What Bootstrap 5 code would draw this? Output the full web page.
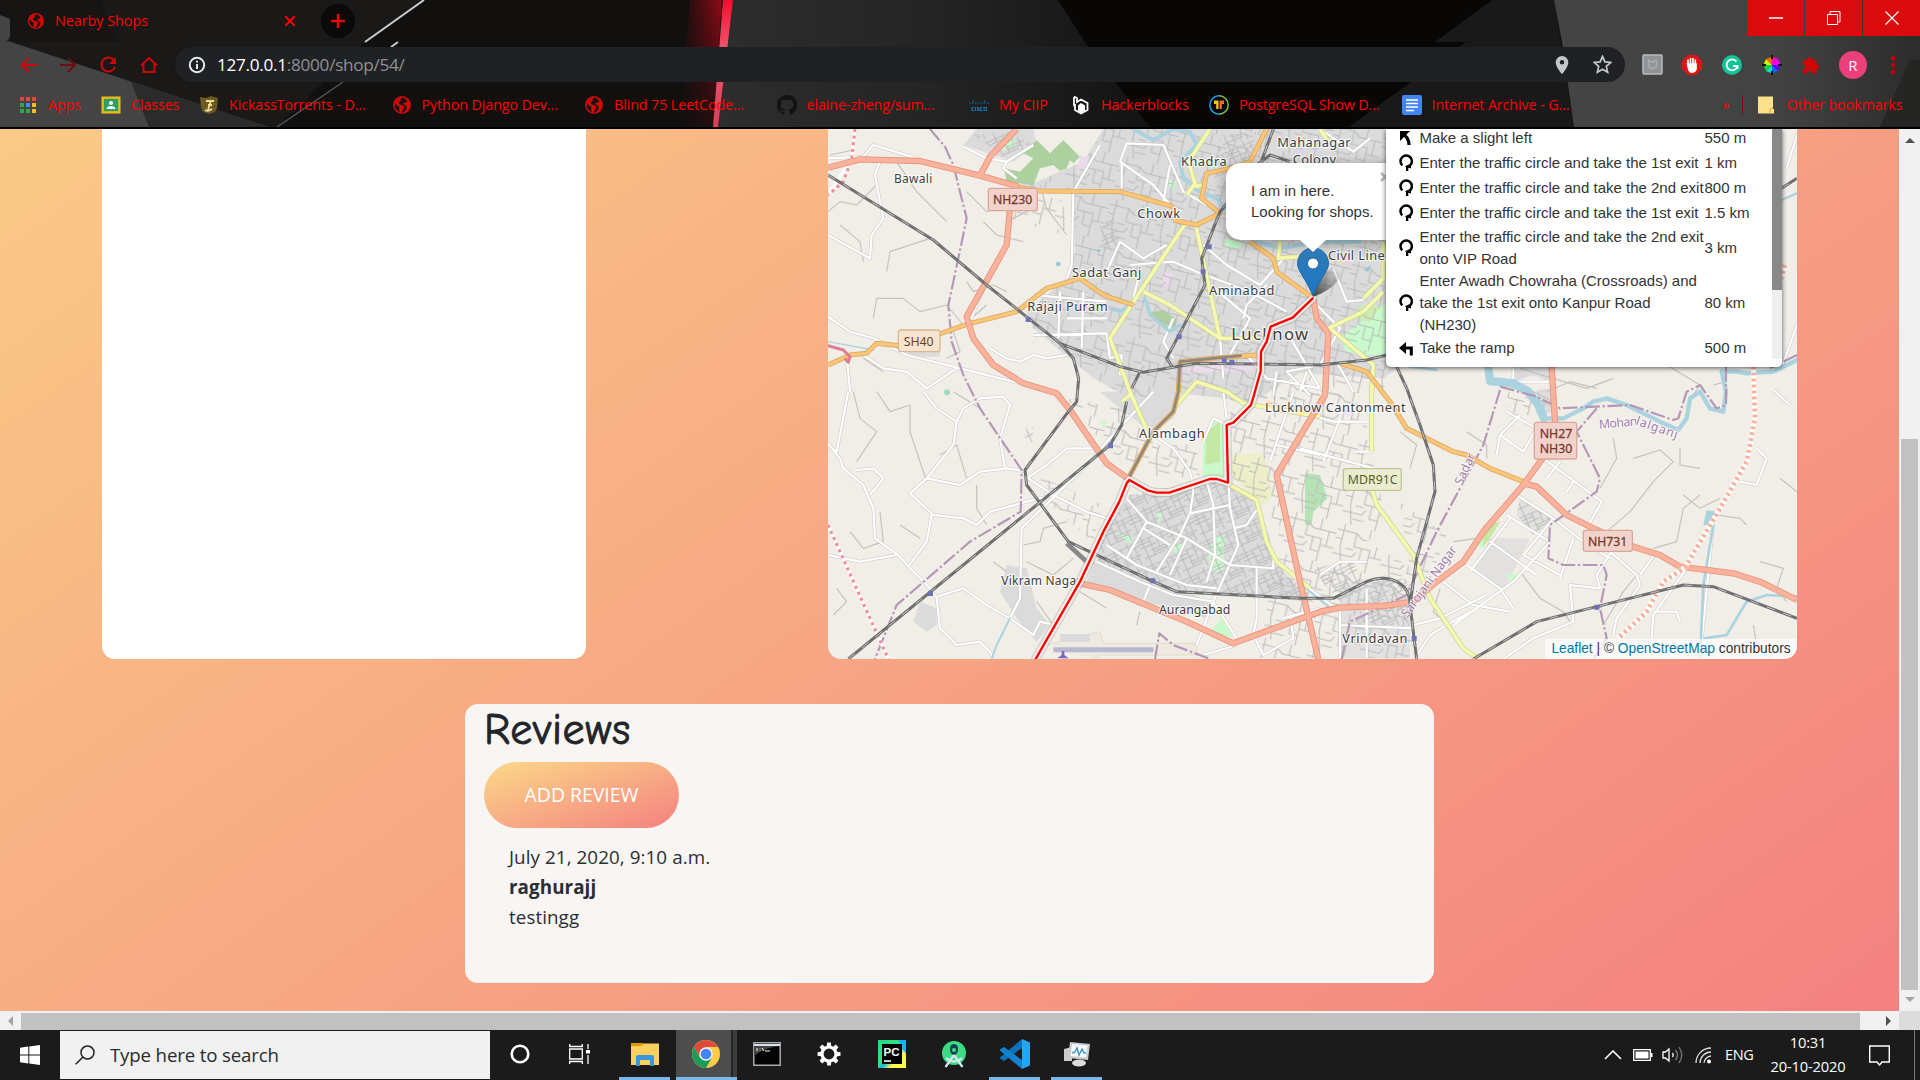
<!DOCTYPE html>
<html lang="en">
<head>
<meta charset="utf-8">
<title>Nearby Shops</title>
<link href="https://cdn.jsdelivr.net/npm/bootstrap@5.3.0/dist/css/bootstrap.min.css" rel="stylesheet">
<style>
body{width:1920px;height:1080px;overflow:hidden;font-family:"Open Sans","Noto Sans",sans-serif;background:#1b1b1b;color:#212529}
svg{display:block;flex:none}
/* browser chrome */
.chrome{height:129px;color:#f00;font-size:14.3px;border-bottom:2px solid #000;line-height:20px;flex:none}
.chrome-art{z-index:0}
.chrome-in{z-index:1}
.tabstrip{height:42px;padding-left:27px}
.tab-title{width:234px;margin-left:10px}
.tab-x{margin-left:-4px}
.newtab{width:34px;height:34px;border-radius:50%;background:#0b0a0a;margin-left:26px}
.winbtns{height:36px;gap:1px}
.winbtns>div{width:57px;background:#db0b0d}
.toolbar{height:45px}
.nav-ic{width:165px;margin-left:20px;gap:21px}
.omni{width:1450px;height:35px;border-radius:18px;background:#202124;margin-left:-10px;font-size:17.2px;letter-spacing:-.3px;color:#8f9296;padding:0 13px}
.omni b{font-weight:400;color:#fff}
.info-ic{margin-right:11px}
.exts{padding-left:17px}
.ext{width:40px;height:34px}
.avatar{width:28px;height:28px;border-radius:50%;background:#ec407a;color:#fff;font-size:15px;margin-left:-3px}
.marks{height:36px;padding-left:18px;letter-spacing:-.1px}
.bm{gap:10px;white-space:nowrap;flex:none}
.bm svg{width:20px;height:20px}
.w83{width:83px}.w98{width:98px}.w192{width:192.5px}.w102{width:102px}.w138{width:138px}.w322{width:321px}
.mark-sep{width:1px;height:20px;background:#801010;margin:0 14px 0 12px}
/* page */
.view{height:882px;flex:none}
.page{width:1899px;background:linear-gradient(to bottom right,#fbd988,#f48180) 0 -465px/1899px 1347px no-repeat}
.top-row{height:530px;padding-left:102px;gap:242px}
.shop-box{width:484px;background:#fff;border-radius:0 0 13px 13px}
.map-box{width:969px;background:#f1eee8;border-radius:0 0 13px 13px;font-family:"Liberation Sans",sans-serif;color:#333}
.route{left:558px;top:0;width:396px;height:238px;background:#fff;border-radius:0 0 5px 5px;box-shadow:0 1px 5px rgba(0,0,0,.65);font-size:15px;line-height:22px;padding:0 0 0 12px}
.route-list{margin-top:-4px;width:374px}
.step{height:25px}
.step>svg{width:17px;height:17px;margin-right:4.5px}
.step>span:nth-child(2){width:285px;white-space:nowrap}
.two{height:45px}.three{height:65.5px}
.mini-track{width:10px;height:230px;background:#efefef}
.mini-thumb{height:161px;background:#888}
.popup{left:398px;top:34px;width:200px;height:77px;background:#fff;border-radius:15px;box-shadow:0 3px 14px rgba(0,0,0,.4);padding:17px 25px;font-size:15px;line-height:21px}
.pin-ic{left:464px;top:110px}
.popup-x{left:552px;top:43px}
.attrib{right:0;bottom:0;height:20px;width:252px;background:rgba(255,255,255,.72);font-size:13.75px;line-height:20px;white-space:nowrap}
.attrib a{color:#0078a8;text-decoration:none}
.reviews{width:969px;height:279px;margin:45px 0 0 465px;border-radius:13px;background:#f9f5f2;padding:0 19px}
.reviews h1{font-family:"Comic Sans MS","Comic Neue","Open Sans",sans-serif;font-size:44px;line-height:48px;margin:2px 0 8px;font-weight:400;letter-spacing:.6px;height:48px;-webkit-text-stroke:.9px #212529}
.btn-add{width:195px;height:66px;border-radius:33px;border:0;background:linear-gradient(to bottom right,#fbd988,#f48180);color:#fff;font-size:19.4px;letter-spacing:0}
.btn-add:hover{color:#fff}
.entry{margin:14px 0 0 25px;font-size:18.8px;line-height:30px;color:#2a2e33;letter-spacing:.08px}
/* scrollbars */
.vbar{width:21px;background:#f1f1f1;padding:9px 0 9px}
.vthumb{width:17px;height:551px;background:#c1c1c1;margin-bottom:7px}
.hbar{height:19px;background:#f1f1f1}
.hthumb{width:1839px;height:17px;background:#c1c1c1}
.corner{background:#dcdcdc}
/* taskbar */
.taskbar{height:50px;background:#1b1b1b;color:#fff;flex:none}
.start{width:60px}
.search{width:430px;height:48px;background:#f1f1f1;color:#2b2b2b;font-size:18.7px;letter-spacing:-.17px;padding-left:15px;gap:15px}
.tb{height:50px;flex:none;border-bottom:3px solid transparent}
.run{border-bottom-color:#76b9ed}
.t60{width:60px}.t64{width:64px}.t62{width:62px}.t51{width:51px}
.t-view{width:69px;padding-right:10px}
.t-active{width:61px;margin-left:6px;padding-right:2px;background:linear-gradient(90deg,#4d4d4d 55px,#252525 55px 57px,#3c3c3c 57px)}
.lang{margin-left:13px;width:29px;font-size:14.5px;letter-spacing:-.4px}
.clock{font-size:14.7px;line-height:24px;letter-spacing:-.15px;width:90px;margin-left:9px;padding-bottom:2px}
.note-ic{margin:0 24px 0 16px}
.desk{width:6px;height:50px;border-left:1px solid #777}
</style>
<script src="https://cdn.jsdelivr.net/npm/bootstrap@5.3.0/dist/js/bootstrap.bundle.min.js"></script>
</head>
<body class="d-flex flex-column m-0">
<svg width="0" height="0" class="position-absolute">
<defs>
<symbol id="globe" viewBox="0 0 20 20"><circle cx="10" cy="10" r="9" fill="#d00808"/><path d="M10.500 2.500 8.300 4.200 9 6 6.600 7.300 7 9.300 10.500 10 12.500 11.800 11 15.500 9 17.500 12 17.200 15 13 14.300 11 12 9.600 10.500 8.500 13 8 15 6.300 13.500 3.800Z" fill="#141312"/><path d="M3 8.200 5 10.500 7.600 12 7 14.500 8 17.300 4.500 15 2.700 11.500Z" fill="#141312"/></symbol>
<symbol id="circ" viewBox="0 0 17 17"><path d="M4.300 11.400A5.700 5.700 0 1 1 11.500 11.900" fill="none" stroke="#000" stroke-width="2.500"/><path d="M7 12.200 13 9.500V14.500L10.300 13.800V17H8V13Z" fill="#000"/></symbol>
</defs>
</svg>

<header class="chrome position-relative">
<svg class="chrome-art position-absolute top-0 start-0" width="1920" height="127" viewBox="0 0 1920 127">
<defs>
<linearGradient id="g1"><stop offset="0" stop-color="#2d2d2d"/><stop offset=".5" stop-color="#242424"/><stop offset="1" stop-color="#131313"/></linearGradient>
<linearGradient id="g2"><stop offset="0" stop-color="#444"/><stop offset=".6" stop-color="#434343"/><stop offset="1" stop-color="#2c2c2b"/></linearGradient>
<linearGradient id="g3"><stop offset="0" stop-color="#a00612" stop-opacity="0"/><stop offset="1" stop-color="#b00818" stop-opacity=".8"/></linearGradient>
<linearGradient id="g5" x1="0" y1="0" x2="0" y2="1"><stop offset="0" stop-color="#11100f" stop-opacity="0"/><stop offset="1" stop-color="#11100f" stop-opacity=".85"/></linearGradient>
<linearGradient id="g4" x1="0" y1="0" x2="0" y2="1"><stop offset="0" stop-color="#ff0a30"/><stop offset=".4" stop-color="#ea5a70"/><stop offset="1" stop-color="#d84055"/></linearGradient>
</defs>
<rect width="1920" height="127" fill="#11100f"/>
<path d="M0 0H424L365 42 277 127H0Z" fill="#1a1918"/>
<path d="M0 0H100L120 42 H0Z" fill="#161514"/>
<path d="M0 15 10 19V36Q9 41 4 42L8 41 269 127H0Z" fill="#444"/>
<path d="M113 75 269 127H149L131 82Z" fill="#2b2b2b"/>
<path d="M424 0 365 42M398 42 391 47" stroke="#ccc" stroke-width="2"/><path d="M343 82 277 127" stroke="#555" stroke-width="1.500"/>
<path d="M733 0H1058L1085 42 1150 127H718Z" fill="url(#g1)"/>
<path d="M690 0H722L713 127H680Z" fill="url(#g3)"/><path d="M680 0H722L713 127H680Z" fill="url(#g5)"/>
<path d="M723 0H733L718 127H713Z" fill="url(#g4)"/>
<path d="M1058 0 1085 42 1150 127H1349L1466 42H1435L1492 0Z" fill="#080706"/>
<path d="M1492 0 1435 42H1466L1349 127H1574L1554 0Z" fill="#191919"/>
<path d="M1554 0 1562 42 1574 127H1920V0Z" fill="url(#g2)"/><path d="M1910 60 1880 127H1920V60Z" fill="#252524"/>
</svg>
<div class="chrome-in position-relative d-flex flex-column">
<div class="tabstrip d-flex align-items-center">
<svg width="18" height="18"><use href="#globe"/></svg>
<div class="tab-title">Nearby Shops</div>
<svg class="tab-x" width="10" height="10" viewBox="0 0 10 10"><path d="M0 0 10 10M10 0 0 10" stroke="#f00" stroke-width="2"/></svg>
<div class="newtab d-flex align-items-center justify-content-center"><svg width="16" height="16"><path d="M8 1V15M1 8H15" stroke="#f00" stroke-width="2.400"/></svg></div>
<div class="winbtns d-flex ms-auto align-self-start">
<div class="d-flex align-items-center justify-content-center"><svg width="14" height="2"><path d="M0 1H14" stroke="#fff" stroke-width="1.500"/></svg></div>
<div class="d-flex align-items-center justify-content-center"><svg width="14" height="14"><path d="M.5 3.500H10.500V13.500H.5ZM3 3V.6H13V11H11" fill="none" stroke="#fff"/></svg></div>
<div class="d-flex align-items-center justify-content-center"><svg width="14" height="14"><path d="M.5.5 13.500 13.500M13.500.5.5 13.500" stroke="#fff" stroke-width="1.200"/></svg></div>
</div>
</div>
<div class="toolbar d-flex align-items-center">
<div class="nav-ic d-flex">
<svg width="18" height="18"><path d="M17 9H2M9 2 2 9 9 16" fill="none" stroke="#d00505" stroke-width="2"/></svg>
<svg width="19" height="18"><path d="M1 9H16M9 2 16 9 9 16" fill="none" stroke="#6e0f0f" stroke-width="2"/></svg>
<svg width="20" height="18"><path d="M15.500 5A7 7 0 1 0 16 11" fill="none" stroke="#d00505" stroke-width="2"/><path d="M17 1V8H10Z" fill="#d00505"/></svg>
<svg width="18" height="18"><path d="M3.500 8V16H14.500V8M1 9.500 9 2 17 9.500" fill="none" stroke="#d00505" stroke-width="2"/></svg>
</div>
<div class="omni d-flex align-items-center">
<svg width="18" height="18" class="info-ic"><circle cx="9" cy="9" r="7.200" fill="none" stroke="#e8eaed" stroke-width="2"/><path d="M9 8V13M9 4.700V6.600" stroke="#e8eaed" stroke-width="2"/></svg>
<div><b>127.0.0.1</b>:8000/shop/54/</div>
<div class="d-flex align-items-center gap-4 ms-auto">
<svg width="14" height="18" viewBox="0 0 14 18"><path fill-rule="evenodd" d="M7 0A6.300 6.300 0 0 0 .7 6.400C.7 11 7 18 7 18S13.300 11 13.300 6.400A6.300 6.300 0 0 0 7 0ZM7 4A2.300 2.300 0 1 1 7 8.600 2.300 2.300 0 0 1 7 4Z" fill="#c4c7c9"/></svg>
<svg width="19" height="19" viewBox="0 0 20 20"><path d="M10 1.500 12.500 7.300 18.700 7.900 14 12 15.400 18.100 10 14.900 4.600 18.100 6 12 1.300 7.900 7.500 7.300Z" fill="none" stroke="#c4c7c9" stroke-width="1.800"/></svg>
</div>
</div>
<div class="exts d-flex align-items-center">
<div class="ext d-flex align-items-center"><svg width="21" height="21"><rect x="1" y="1" width="19" height="19" rx="1" fill="#8f9296" stroke="#b9bcbf" stroke-width="1.500"/><path d="M6.500 6 10.500 8.500 14.500 6V12.500L10.500 15 6.500 12.500Z" fill="none" stroke="#abaeb1" stroke-width="1.500"/></svg></div>
<div class="ext d-flex align-items-center"><svg width="20" height="20" viewBox="0 0 20 20"><path d="M6 0H14L20 6V14L14 20H6L0 14V6Z" fill="#e60f12"/><path d="M6 9V5M8.500 9V3.500M11 9V3.500M13.300 10V5M5.500 9H14V13C14 18 8 18 7 15Z" stroke="#fff" stroke-width="1.700" stroke-linecap="round" fill="#fff"/></svg></div>
<div class="ext d-flex align-items-center"><svg width="20" height="20"><circle cx="10" cy="10" r="10" fill="#15c39a"/><path d="M14.500 6.500A5.500 5.500 0 1 0 15.500 11H11M15.500 11V14" fill="none" stroke="#fff" stroke-width="1.800"/></svg></div>
<div class="ext d-flex align-items-center"><svg width="20" height="20" viewBox="-10 -10 20 20"><path d="M0 0V-8.500L6-6Z" fill="#f0c"/><path d="M0 0 6-6 8.500 0Z" fill="#f0f"/><path d="M0 0H8.500L6 6Z" fill="#60f"/><path d="M0 0 6 6 0 8.500Z" fill="#06f"/><path d="M0 0V8.500L-6 6Z" fill="#0de0d0"/><path d="M0 0-6 6-8.500 0Z" fill="#0d3"/><path d="M0 0H-8.500L-6-6Z" fill="#cf0"/><path d="M0 0-6-6 0-8.500Z" fill="#f60"/><path d="M0-10V-6M0 10V6M-10 0H-6M10 0H6" stroke="#111" stroke-width="2"/></svg></div>
<div class="ext d-flex align-items-center"><svg width="19" height="19" viewBox="0 0 19 19"><path d="M1 5H5.500A2.300 2.300 0 1 1 10 5H14.500V9.500A2.300 2.300 0 1 1 14.500 14V18.500H10A2.300 2.300 0 1 0 5.500 18.500H1V14A2.300 2.300 0 1 0 1 9.500Z" fill="#d00505"/></svg></div>
<div class="avatar d-flex align-items-center justify-content-center">R</div>
<svg width="28" height="18"><path d="M24 0H28V4H24ZM24 7H28V11H24ZM24 14H28V18H24Z" fill="#b50505"/></svg>
</div>
</div>
<div class="marks d-flex align-items-center">
<div class="bm d-flex w83"><svg viewBox="0 0 20 20"><path d="M2 2H6V6H2ZM8 2H12V6H8ZM14 2H18V6H14Z" fill="#e8453c"/><path d="M2 8H6V12H2ZM2 14H6V18H2Z" fill="#2da94f"/><path d="M8 8H12V12H8Z" fill="#4688f1"/><path d="M14 8H18V12H14ZM14 14H18V18H14Z" fill="#f9bb2d"/><path d="M8 14H12V18H8Z" fill="#2da94f"/></svg>Apps</div>
<div class="bm d-flex w98"><svg viewBox="0 0 20 20"><rect x=".5" y="1.500" width="19" height="17" fill="#f4b912"/><rect x="2.800" y="3.800" width="14.400" height="12.400" fill="#2f9e62"/><circle cx="10" cy="8" r="2" fill="#fff"/><path d="M5.500 14Q6 11 10 11T14.500 14Z" fill="#fff"/></svg>Classes</div>
<div class="bm d-flex w192"><svg viewBox="0 0 20 20"><path d="M1 2 7 3 12 1 19 3 18 13 16 17 10 19 4 17 2 12Z" fill="#6b5a24"/><path d="M7 6H15M12 5 9 15M6 15Q9 17 13 14M9 10H13" stroke="#efdf94" stroke-width="1.800" fill="none"/></svg>KickassTorrents - D...</div>
<div class="bm d-flex w192"><svg viewBox="0 0 20 20"><use href="#globe"/></svg>Python Django Dev...</div>
<div class="bm d-flex w192"><svg viewBox="0 0 20 20"><use href="#globe"/></svg>Blind 75 LeetCode...</div>
<div class="bm d-flex w192"><svg viewBox="0 0 16 16"><path fill="#131211" d="M8 0C3.580 0 0 3.580 0 8c0 3.540 2.290 6.530 5.470 7.590.4.070.55-.17.55-.38v-1.340c-2.230.48-2.700-1.070-2.700-1.070-.36-.92-.89-1.170-.89-1.170-.73-.5.05-.49.05-.49.81.06 1.230.83 1.230.83.72 1.230 1.880.87 2.340.67.070-.52.28-.88.51-1.080-1.780-.2-3.640-.89-3.640-3.950 0-.87.31-1.590.82-2.150-.08-.2-.36-1.020.08-2.120 0 0 .67-.21 2.200.82a7.500 7.500 0 0 1 4 0c1.530-1.040 2.200-.82 2.200-.82.44 1.100.16 1.920.08 2.120.51.56.82 1.270.82 2.150 0 3.070-1.870 3.750-3.650 3.950.29.25.54.73.54 1.480v2.190c0 .21.15.46.55.38A8 8 0 0 0 8 0"/></svg>elaine-zheng/sum...</div>
<div class="bm d-flex w102"><svg viewBox="0 0 20 20"><path d="M1 7V9M4 5V9M7 7V9M10 7V9M13 7V9M16 5V9M19 7V9" stroke="#0a5a78" stroke-width="1.200"/><path d="M5 12.500H3V15.500H5M6.500 12V16M10 12.500H8.500V14H10V15.500H8M13.500 12.500H11.500V15.500H13.500M15 12.500H17.500V15.500H15Z" fill="none" stroke="#0a7aa6" stroke-width="1.100"/></svg>My CIIP</div>
<div class="bm d-flex w138"><svg viewBox="0 0 20 20"><path d="M3 1.500 6 3V7L10 4.500 16.500 8V15L10 18.500 4 15V9M3 2V10L4 12" fill="none" stroke="#fff" stroke-width="1.800"/><path d="M10 8 14 10.500V15.500L10 18 7 15.500V10.500Z" fill="#fff"/></svg>Hackerblocks</div>
<div class="bm d-flex w192"><svg viewBox="0 0 20 20"><path d="M10 .8A9.200 9.200 0 0 0 10 19.200" fill="none" stroke="#13a7e8" stroke-width="1.500"/><path d="M10 .8A9.200 9.200 0 0 1 10 19.200" fill="none" stroke="#84c341" stroke-width="1.500"/><path d="M5 5.500H9.500V14H7.200V9H5Z" fill="#fcc419"/><path d="M10.500 5.500H15V9H12.800V14H10.500Z" fill="#f26a2e"/></svg>PostgreSQL Show D...</div>
<div class="bm d-flex w322"><svg viewBox="0 0 20 20"><rect width="20" height="20" rx="2" fill="#4285f4"/><path d="M4 5H16M4 8.500H16M4 12H16M4 15.500H12" stroke="#fff" stroke-width="1.700"/></svg>Internet Archive - G...</div>
<div>»</div><div class="mark-sep"></div>
<div class="bm d-flex"><svg viewBox="0 0 20 20"><path d="M1 1.500H16V14H17V18.500H1Z" fill="#fde08a"/><path d="M13 18.500V15Q13 13 16 13" stroke="#dba520" fill="none"/></svg>Other bookmarks</div>
</div>
</div>
</header>

<main class="view d-flex">
<div class="page">
<div class="top-row d-flex">
<div class="shop-box"></div>
<div class="map-box position-relative overflow-hidden">
<svg width="969" height="530" viewBox="24 12 2907 1590" fill="none" stroke-linejoin="round">
<defs>
<pattern id="st" width="150" height="130" patternUnits="userSpaceOnUse" patternTransform="rotate(14)"><path d="M0 20H60L80 34H150M20 0V70L36 130M60 20V60H110V130M0 92H60L70 76M100 34V0M110 80H150M36 70H60M128 34V80M0 46H20M84 60V100H110M70 110H36" stroke="#bababa" stroke-width="3" fill="none"/></pattern>
<pattern id="st2" width="90" height="80" patternUnits="userSpaceOnUse" patternTransform="rotate(-24)"><path d="M0 12H90M0 34H52M30 50H90M0 66H66M14 0V80M36 12V66M58 0V50M76 12V80M0 22H36M58 24H90M36 58H76" stroke="#b8b8b8" stroke-width="2.800" fill="none"/></pattern>
<linearGradient id="pin" x1="0" y1="0" x2="0" y2="1"><stop offset="0" stop-color="#2e7cb8"/><stop offset="1" stop-color="#1d75c4"/></linearGradient>
</defs>
<!-- built-up land -->
<g fill="#dbdbdb">
<path d="M560 180 650 170 790 110 850 12H1740V725H1740L1690 760 1440 745 1300 830 1040 800 950 830 820 760 640 610 620 560 740 460 765 380 755 200Z"/>
<path d="M470 12 640 12 650 60 580 110 430 60Z"/>
<path d="M930 1110 1060 1105 1200 1060 1300 1110 1350 1240 1360 1310 1480 1430 1060 1400 830 1310 850 1230Z"/><path d="M820 1310 1180 1430 1160 1480 980 1430 800 1370Z"/>
<path d="M840 800H1080L1060 880 990 920 900 850Z"/>
<path d="M560 1320 620 1330 650 1450 690 1500 650 1550 590 1480 540 1400Z"/><path d="M300 1430 350 1450 350 1500 320 1520 280 1490Z"/>
<path d="M1560 1380 1700 1350 1770 1450V1600H1560Z" opacity=".7"/><path d="M2080 720H2190V770L2140 750 2080 770ZM2150 795 2200 790 2200 860 2150 870Z"/>
<path d="M2100 1120 2200 1180 2140 1230 2090 1170ZM2010 1240 2130 1240 2050 1400 1960 1340Z" opacity=".7"/>
<path d="M260 680H360V695H270Z"/>
</g>
<!-- green, water, leisure -->
<g fill="#c8facc">
<path d="M1660 560 1700 535V690H1640L1580 680 1560 640Z"/><path d="M1190 880 1210 890V1055H1148L1150 940Z"/><path d="M1190 1235 1215 1230 1210 1340 1170 1340 1165 1270ZM1060 1255 1090 1255 1080 1280 1060 1280ZM1010 1165 1028 1165 1015 1200ZM885 1220 940 1240 930 1255ZM1205 1480 1240 1540 1170 1520ZM840 880 860 890 850 910Z"/>
<path d="M2060 1350 2095 1345 2085 1375 2070 1380ZM1970 1260 2000 1240 1990 1270ZM580 40 590 60 540 80ZM1040 165 1070 170 1060 200ZM1210 340 1270 350 1260 370H1220Z"/></g>
<path d="M1620 540 1680 545 1650 590 1600 580Z" fill="#cdebb0"/>
<path d="M552 130 600 140 640 100 610 85 650 45 690 85 730 45 780 95 760 115 750 105 740 130 720 138 700 120 660 130 640 180 560 170Z" fill="#add19e"/>
<path d="M985 565 1030 555 1072 585 1065 610 1030 600Z" fill="#add19e"/><path d="M1455 1045 1500 1050 1522 1120 1480 1160 1475 1200H1455Z" fill="#b5e3b5"/>
<path d="M1160 920 1200 890V1010L1155 1020Z" fill="#c5e8a5"/><path d="M1225 990 1330 985 1362 1110 1330 1140 1240 1060Z" fill="#eeeec8"/>
<path d="M1990 1200 2040 1190 2010 1240 1990 1265Z" fill="#c5e8a5"/>
<path d="M770 150 780 90 815 100 790 130ZM1030 440 1060 445 1050 490 1025 480ZM1100 730 1300 705V735L1110 745Z" fill="#eadcea"/>
<path d="M680 1560 840 1520 850 1555H1130V1590H840L820 1600" stroke="#e5dcc8" stroke-width="3" fill="#eeeae0"/><path d="M700 1567H1000V1582H700Z" fill="#b8b8d0"/><path d="M720 1527H810V1550H720Z" fill="#d9d9de"/>
<path d="M2660 1155 2690 1160 2675 1205 2650 1200Z" fill="#aad3df"/>
<g fill="#8fc9d8"><circle cx="715" cy="417" r="7"/><circle cx="836" cy="377" r="5"/><path d="M1630 435 1655 420 1645 440Z"/></g><circle cx="381" cy="802" r="9" fill="#9fdcc3"/>
<!-- dense local streets -->
<g fill="url(#st)">
<path d="M560 180 650 170 790 110 850 12H1700V725L1690 800 1300 830 1040 800 950 830 820 760 640 610 620 560 740 460 765 380 755 200Z"/>
<path d="M640 200 730 230 740 330 580 290 590 210ZM740 820 900 850 1010 960 1130 960 1140 1060 940 1050 820 920ZM650 1050 850 1140 820 1250 680 1130Z"/>
<path d="M1230 820 1620 800 1700 1200 1640 1250 1780 1330V1600H1320L1340 1450 1380 1200 1240 1060 1230 900Z"/>
<path d="M2060 800H2180V870H2070ZM1740 1130 1880 1230 1830 1370 1760 1300Z"/>
</g>
<g fill="url(#st2)"><path d="M930 1110 1200 1060 1300 1110 1360 1310 1480 1430 1060 1400 830 1310 850 1230ZM1200 30 1310 20 1290 120 1180 160ZM840 300 880 280 910 370 850 380ZM460 30 560 20 640 60 560 100ZM620 900 640 910V950H610ZM1470 1330 1600 1310 1640 1390 1560 1430Z"/><path d="M2100 1120 2200 1180 2140 1230 2090 1170ZM1660 1370 1760 1360 1770 1500 1600 1500Z"/></g>
<!-- country lanes -->
<g stroke="#c4c2be" stroke-width="3.500">
<path d="M24 260 60 230 110 240 170 180M230 110 290 200 380 290M440 200 500 260 560 240M490 290 530 330 610 350M130 410 120 350 60 300M200 440 210 380 330 340M30 90 100 75M160 580 170 520 250 520 300 560 380 540 430 600 500 540M190 740 130 700M400 620 420 680 380 700M560 500 520 480 460 500 440 470M660 180 680 250 740 330M640 250 560 290"/>
<path d="M100 800 120 880 170 920 110 1010M170 800 210 860 270 840 270 920 320 1070M400 800 480 850M360 990 410 960 440 1060M470 1080 470 1150 500 1200M90 1220 130 1270 190 1250 180 1160M240 1200 300 1240M40 1470 80 1430 50 1390M520 1310 560 1340M610 1260 660 1250 670 1210 740 1190M620 1310 700 1350 760 1300M700 1500 650 1430M780 1400 860 1450M950 1500 960 1460"/>
<path d="M2380 940 2390 1000 2340 1090M2440 1000 2520 975 2560 1010 2500 1070 2430 1160 2360 1220M2580 970 2580 1020 2640 1030M2690 1170 2760 1180 2780 1200M2880 1060 2931 1100M2640 1110 2590 1150 2570 1250 2500 1270M2590 1110 2640 1150 2700 1120M2350 1500 2410 1400 2450 1350M2100 1340 2160 1420 2230 1460 2250 1490M1860 1390 1840 1460 1900 1520M1900 1250 1970 1240 2000 1200M1940 920 2000 960 2000 1000M2120 790 2200 830M2100 730 2300 790 2380 760M2820 1310 2890 1330 2870 1390 2900 1430M2800 1500 2810 1560 2850 1600M2540 720 2640 780 2600 840M1740 920 1790 960 1770 1030M2680 780 2720 770M2180 800 2250 770 2330 790"/>
</g>
<!-- white minor roads: casing then fill -->
<g stroke="#cdcbc7" stroke-width="10">
<path id="mr" d="M180 110 165 150 190 280 155 330 150 400 24 330M24 100 130 95 160 60 290 100M24 575 90 620 160 640 260 690 400 725 600 775M80 690 90 800M130 690 190 730 260 740 320 790 410 730M430 65 500 100 560 110 550 130 590 160M490 490 470 540 450 590M510 670 560 700 600 710 640 690 680 700 740 690M640 60 560 110M760 200 755 420 740 460M760 200 840 60M900 110 920 55 1030 60 1060 130 1090 200 1160 240M905 190 905 110M1030 230 1050 120M1050 240 1000 180 900 110M860 440 900 350 970 400 1040 360M930 420 1060 410 1130 440 1290 500 1400 560M960 440 940 520M1060 580 1030 650 1060 700M640 510 860 530M720 500 715 640M790 500 785 670M640 630 860 625M740 580 860 580M860 625 870 700 905 690 900 750M1150 360 1220 420 1320 480 1400 390M1160 470 1290 580 1230 690M1200 640 1210 760M1270 580 1280 540 1340 480M1500 12 1600 80 1650 40M1280 690 1340 760 1500 790M1480 530 1560 610 1500 720 1400 740 1470 810M1400 620 1500 790M1360 810 1370 740M1550 710 1600 800M1460 740 1440 800M1540 430 1580 530 1630 525M24 955 60 1000 70 1030 130 1080 160 1150 165 1240 235 1290 270 1330 330 1390 350 1420 360 1510 410 1560 480 1550 510 1580 520 1602M24 960 50 980 85 800M110 1035 160 1030 190 1060 150 1110M310 800 350 850 410 890 400 960 320 1060 420 1080 480 1040 560 1030 620 1040M320 1060 270 1105 340 1170 430 1180 470 1200 510 1160 620 1130 700 1110M335 1170 320 1250 265 1325M24 1290 120 1310 230 1290M410 890 430 850 480 820 550 815 570 840 540 940 555 1030M350 1415 430 1390 500 1440 570 1480 640 1530 660 1490 700 1500M570 1480 600 1420 605 1210 820 1000 860 950 1000 800M620 1060 680 1020 740 970 820 970M625 1060 700 1110 800 1160 860 1180M1000 930 1060 970 1110 1040 1115 1060 1120 1100 1110 1165 1080 1230 1010 1340M1110 1165 1230 1140M1160 1070 1180 1140 1185 1290 1160 1370M920 1120 980 1190 1100 1240 1230 1320 1360 1330 1360 1300M980 1190 920 1300M860 1260 950 1320 1100 1380 1190 1390M830 1310 960 1370 1060 1410 1180 1430 1250 1540M1225 1060 1230 1150 1255 1260 1180 1430 1130 1560M1320 1140 1280 1200 1240 1210M1310 1330 1310 1480 1300 1530 1330 1590 1420 1540 1410 1470M970 1210 1050 1260M1100 1240 1050 1350M990 1380 970 1430M1150 1590 1250 1560M1210 800 1220 880M1150 950 1180 880 1220 900M1420 800 1350 1010M1370 960 1500 990"/>
<path id="me" d="M1440 860 1540 890 1660 890M1560 880 1510 1010M1440 970 1660 1030M1600 980 1660 980M2060 860 2150 910 2110 980 2040 930 2100 870M2040 930 2030 990M2170 1000 2345 1130 2300 1210M2260 1070 2240 1100M2090 1110 2200 1180 2290 1250M2200 1180 2110 1290 2220 1350M2060 1170 2190 1250M2070 1180 1950 1340M2190 1250 2080 1370 1900 1500M2150 1350 2010 1250M1940 1320 2040 1390 2080 1450M1870 1370 1960 1440 2070 1460M2290 1250 2370 1300M2370 1280 2450 1350 2460 1380 2390 1480 2380 1530M2510 1280 2460 1350M2380 1270 2330 1350 2340 1390 2250 1380 2260 1490 2140 1540 2050 1602M2220 1360 2260 1240M1780 1500 1860 1480 2000 1410M1785 1600 1830 1530 1950 1460M1560 1500 1780 1510M1640 1390V1600M1440 1370 1560 1460 1560 1600M1500 1350 1560 1310 1640 1310M2810 970 2840 1000 2810 1080 2760 1070M2600 1330 2550 1400 2500 1470 2490 1602M2510 1460 2570 1460 2580 1490M2931 600 2880 740M2931 30 2900 130M2680 1190 2640 1602M2080 730 2080 770 2190 770M2910 840 2860 795M2220 1010 2180 1060M1390 1480 1500 1450"/>
</g>
<g stroke="#fff" stroke-width="6.500"><use href="#mr"/><use href="#me"/></g>
<!-- rivers -->
<g stroke="#aad3df" stroke-linecap="round">
<path d="M940 12 1000 45 1060 12 1110 20 1130 60 1080 110 1090 160 1130 195 1190 220 1240 280 1310 350 1380 370 1500 350 1620 350" stroke-width="12"/>
<path d="M870 550 900 560 930 540M975 520 990 570 1050 620 1080 600" stroke-width="10"/>
<path d="M2005 725 2010 765 2070 780 2120 800 2150 830 2170 880 2230 880 2290 850 2320 830 2360 820 2420 840 2520 890 2575 915 2600 880 2610 820 2640 800 2670 850 2710 860 2718 800 2705 740 2750 740 2780 745 2860 740 2931 705" stroke-width="13"/>
<path d="M2005 725 2010 768 2080 775 2125 800 2155 840 2172 880" stroke-width="25"/><path d="M1770 725 1850 735" stroke-width="8"/>
<path d="M2885 225 2931 205" stroke-width="7"/><path d="M2680 1200 2650 1380 2640 1602M2655 1540 2720 1530 2780 1430 2840 1410 2931 1415" stroke-width="8"/>
<path d="M570 1480 530 1560 515 1602M1440 1375 1530 1450" stroke-width="6"/><path d="M24 650 160 675" stroke-width="4"/>
</g>
<!-- boundaries -->
<g stroke="#b596b6" stroke-width="6.500" stroke-dasharray="44 8 7 8">
<path d="M330 12 375 65 400 120 440 280 415 400 385 540 395 650 430 750 480 850 605 1035 602 1160 450 1250 230 1440 165 1602"/>
<path d="M1005 1602 1018 1525 1060 1560 1170 1602M2040 795 1990 960 1850 1220 1760 1410 1590 1490 1565 1602M2040 785 2150 815 2220 850 2430 840 2560 885 2575 880 2600 800 2640 780 2690 850 2718 840V725M2330 850 2270 920 2340 1060 2330 1100 2190 1200 2185 1300 2230 1320 2350 1320 2360 1350 2340 1450 2360 1540 2320 1602M2931 690 2850 730"/>
</g>
<g stroke="#fff" stroke-width="10"><path d="M105 12 95 100 24 210M24 1200 205 1602"/></g>
<g stroke="#f08a9c" stroke-width="9" stroke-dasharray="9 11"><path d="M105 12 95 100 70 170 24 210M24 1200 205 1602"/></g>
<!-- secondary roads -->
<g stroke="#c9cf9a" stroke-width="15"><path id="yl" d="M1170 12 1105 110 1125 175 1100 210M1125 185 1150 180M1100 290 960 500 870 640 930 800 980 915M1125 290 1200 640 1320 640M970 500 1050 540 1200 640M1370 400 1500 390M1630 520 1690 460 1690 350M1525 610 1630 560 1690 500M1530 610 1660 720 1655 800V980M1655 1090 1670 1140 1700 1180 1780 1290 1830 1420 1930 1570 1975 1602M1230 1080 1310 1125 1340 1250 1370 1310 1470 1390M905 830 930 810M1060 850 1130 770 1220 800 1270 835 1500 875M1380 350 1375 400M1500 12 1525 50"/></g>
<use href="#yl" stroke="#f4f9ae" stroke-width="11"/>
<!-- orange roads -->
<g stroke="#d9a860" stroke-width="15"><path id="or" d="M580 185 660 198 900 200 1060 245M1060 285 1130 300 1200 265 1145 220 1160 145 1230 130 1290 110 1340 12M24 720 90 690 140 685 170 655 240 662M350 630 440 598 590 560 680 490 780 460 850 510 940 540M1290 350 1360 400 1370 440 1480 520M1560 715 1640 740 1710 830 1760 910 1900 980 1940 990 2010 1030 2110 1070M1310 690 1180 700 1080 710 1075 800 1060 860 1000 920 925 1060"/></g>
<use href="#or" stroke="#fcc577" stroke-width="10"/>
<path d="M1265 692 1180 700 1080 710 1075 800 1060 860 1000 920 925 1060" stroke="#8f877c" stroke-width="8"/>
<!-- trunk roads -->
<g stroke="#e8927b" stroke-width="19"><path id="tr" d="M24 128 120 103 300 108 480 152 590 183 570 250 560 360 440 575 460 640 520 720 610 775 710 805 750 855 860 1015 930 1065M480 152 510 95 590 12M780 1375 870 1395 1100 1490 1240 1555 1500 1460 1560 1448 1700 1442 1780 1430 1850 1370 1930 1310 1990 1220 2110 1080 2200 955 2205 890 2195 725M1480 520 1490 580 1525 625 1515 810 1370 1050 1440 1370 1495 1602M2110 1075 2150 1085 2240 1170 2330 1215 2440 1265 2520 1290 2580 1325 2740 1345 2820 1370 2931 1425"/></g>
<use href="#tr" stroke="#f9b29c" stroke-width="14"/>
<path d="M24 662 70 675 90 695 85 712 74 700" stroke="#dc7e90" stroke-width="9"/>
<g stroke="#fff" stroke-width="15"><path id="ds" d="M2895 420 2860 540M2800 725 2805 880 2780 1010 2700 1150 2600 1320M2600 1325 2530 1370 2480 1460 2395 1540"/></g><use href="#ds" stroke="#f7b09c" stroke-width="14" stroke-dasharray="8 10"/>
<!-- railways -->
<g stroke="#707070" stroke-width="9"><path id="rl" d="M24 150 340 345 500 480 720 655 900 725 970 742 1130 715 1500 720 1640 705 1700 690M720 655 760 700 776 760 770 830 745 860 615 1035 620 1080 745 1250 1000 1370 1070 1400 1440 1420 1540 1420 1640 1370Q1690 1350 1730 1370T1770 1440L1790 1602M1360 12 1320 120 1200 260 1145 400 1155 480 1040 700 1060 730M935 790 960 740M85 1602 870 960 905 900 920 830M1730 725 1760 790 1800 900 1840 1020 1845 1100 1790 1300 1770 1440M1960 1602 2150 1490 2390 1430 2590 1380 2680 1385 2931 1480M1310 120 1350 90 1410 110M2885 190 2931 160"/></g>
<use href="#rl" stroke="#cfcfcf" stroke-width="2.600" stroke-dasharray="26 26"/>
<path d="M740 1255 800 1310" stroke="#888" stroke-width="14"/>
<g fill="#6f73b5"><path d="M1160 358h15v15h-15ZM1142 433h15v15h-15ZM1070 628h15v15h-15ZM617 576h15v15h-15ZM1205 700h15v15h-15ZM1228 704h15v15h-15ZM864 955h15v15h-15ZM991 1360h15v15h-15ZM324 1398h15v15h-15ZM2323 1439h15v15h-15ZM1775 1533h15v15h-15Z"/><path d="M725 1578H733V1590L746 1600H712L725 1590Z" fill="#8461c4"/></g>
<!-- place names -->
<g fill="#3d3d3d" stroke="#fff" stroke-opacity=".75" stroke-width="7" paint-order="stroke" font-family="'Noto Sans','Open Sans',sans-serif" font-size="38.500" lengthAdjust="spacingAndGlyphs">
<text x="222" y="175" textLength="115" font-size="36">Bawali</text><text x="1083" y="124" textLength="137">Khadra</text><text x="1372" y="66" textLength="220">Mahanagar</text><text x="1418" y="118" textLength="130">Colony</text><text x="952" y="279" textLength="128">Chowk</text><text x="756" y="456" textLength="208">Sadat Ganj</text><text x="622" y="558" textLength="241">Rajaji Puram</text><text x="1167" y="511" textLength="196">Aminabad</text><text x="1234" y="645" textLength="230" font-size="50">Lucknow</text><text x="1524" y="406" textLength="190">Civil Lines</text>
<text x="1335" y="861" textLength="422">Lucknow Cantonment</text><text x="957" y="938" textLength="197">Alambagh</text><text x="544" y="1380" textLength="240" font-size="36">Vikram Nagar</text><text x="1017" y="1468" textLength="214" font-size="37">Aurangabad</text><text x="1567" y="1554" textLength="195">Vrindavan</text>
</g>
<g fill="#a07ba5" stroke="#fff" stroke-opacity=".8" stroke-width="5" paint-order="stroke" font-family="'Noto Sans','Open Sans',sans-serif" font-size="37">
<text transform="translate(1926 1083) rotate(-66)">Sadar</text><text transform="translate(1762 1480) rotate(-54)" textLength="255">Sarojani Nagar</text><text transform="translate(2338 911) rotate(-5)" textLength="115">Mohan</text><text transform="translate(2446 898) rotate(19)" textLength="130">lalganj</text></g>
<!-- road shields -->
<g stroke-width="4" font-family="'Noto Sans','Open Sans',sans-serif" font-size="37" text-anchor="middle">
<g fill="#f1d3cb" stroke="#dba898"><rect x="505" y="190" width="147" height="67" rx="7"/><rect x="2143" y="892" width="127" height="110" rx="7"/><rect x="2290" y="1216" width="147" height="63" rx="7"/></g>
<rect x="235" y="615" width="125" height="65" rx="7" fill="#f5e4cf" stroke="#dcb68d"/><rect x="1570" y="1031" width="174" height="65" rx="7" fill="#eaecd2" stroke="#bfc692"/>
<g fill="#78372d" stroke="#78372d" stroke-width=".8"><text x="578" y="236" textLength="118" lengthAdjust="spacingAndGlyphs">NH230</text><text x="2208" y="939" textLength="98" lengthAdjust="spacingAndGlyphs">NH27</text><text x="2208" y="984" textLength="98" lengthAdjust="spacingAndGlyphs">NH30</text><text x="2363" y="1262" textLength="118" lengthAdjust="spacingAndGlyphs">NH731</text></g>
<text x="296" y="662" fill="#6b4322" textLength="90" lengthAdjust="spacingAndGlyphs">SH40</text><text x="1658" y="1077" fill="#565e25" textLength="149" lengthAdjust="spacingAndGlyphs">MDR91C</text>
</g>
<!-- route: shadow, casing, line -->
<defs><path id="rt" d="M1478 520 1418 578 1352 605 1340 650 1323 680 1322 738 1302 810 1293 840 1240 893 1220 900 1224 1073 1190 1062H1170L1048 1103H1010L985 1097 928 1065 920 1075 898 1130 850 1220 780 1370 640 1614"/></defs>
<g stroke-linecap="round"><use href="#rt" stroke="#777" stroke-opacity=".25" stroke-width="28"/><use href="#rt" stroke="#f5f3ef" stroke-opacity=".9" stroke-width="20"/><use href="#rt" stroke="#f00" stroke-width="7"/></g>
</svg>
<div class="popup position-absolute">I am in here.<br>Looking for shops.</div>
<svg class="pin-ic position-absolute" width="62" height="64" viewBox="0 0 62 64"><defs><linearGradient id="sh" x1="0" y1="1" x2="1" y2="0"><stop offset="0" stop-color="#222" stop-opacity=".85"/><stop offset=".9" stop-color="#222" stop-opacity="0"/></linearGradient></defs><path d="M21 58 26 40 40 28Q52 26 48 38Q42 50 21 58Z" fill="url(#sh)"/><path d="M21 9C12 9 5.500 16 5.500 24.500 5.500 32 13 38 21 57 29 38 36.500 32 36.500 24.500 36.500 16 30 9 21 9Z" fill="url(#pin)" stroke="#2a6798" stroke-width="1"/><path d="M7 0H35L21 13Z" fill="#fff"/><circle cx="21" cy="24.500" r="5.500" fill="#fff" stroke="#29689b"/></svg>
<svg class="popup-x position-absolute" width="10" height="10"><path d="M1 1 9 9M9 1 1 9" stroke="#bbb" stroke-width="2.500"/></svg>
<div class="route position-absolute d-flex">
<div class="route-list d-flex flex-column">
<div class="step d-flex align-items-center"><svg viewBox="0 0 17 17"><path d="M4 4.500Q11 8 11 16" fill="none" stroke="#000" stroke-width="3.200"/><path d="M2 2H12L2 12Z" fill="#000"/></svg><span>Make a slight left</span><span>550 m</span></div>
<div class="step d-flex align-items-center"><svg><use href="#circ"/></svg><span>Enter the traffic circle and take the 1st exit</span><span>1 km</span></div>
<div class="step d-flex align-items-center"><svg><use href="#circ"/></svg><span>Enter the traffic circle and take the 2nd exit</span><span>800 m</span></div>
<div class="step d-flex align-items-center"><svg><use href="#circ"/></svg><span>Enter the traffic circle and take the 1st exit</span><span>1.5 km</span></div>
<div class="step two d-flex align-items-center"><svg><use href="#circ"/></svg><span>Enter the traffic circle and take the 2nd exit<br>onto VIP Road</span><span>3 km</span></div>
<div class="step three d-flex align-items-center"><svg><use href="#circ"/></svg><span>Enter Awadh Chowraha (Crossroads) and<br>take the 1st exit onto Kanpur Road<br>(NH230)</span><span>80 km</span></div>
<div class="step d-flex align-items-center"><svg viewBox="0 0 17 17"><path d="M6 8H13.300V15.500" fill="none" stroke="#000" stroke-width="3"/><path d="M1 8 8 2V14Z" fill="#000"/></svg><span>Take the ramp</span><span>500 m</span></div>
</div>
<div class="mini-track"><div class="mini-thumb"></div></div>
</div>
<div class="attrib position-absolute text-center"><a href="#">Leaflet</a> | © <a href="#">OpenStreetMap</a> contributors</div>
</div>
</div>
<section class="reviews overflow-hidden">
<h1>Reviews</h1>
<button class="btn-add btn d-block" type="button">ADD REVIEW</button>
<div class="entry">July 21, 2020, 9:10 a.m.<br><b>raghurajj</b><br>testingg</div>
</section>
</div>
<div class="vbar d-flex flex-column align-items-center">
<svg width="10" height="5"><path d="M0 5 5 0 10 5Z" fill="#505050"/></svg>
<div class="vthumb mt-auto"></div>
<svg width="10" height="5"><path d="M0 0 5 5 10 0Z" fill="#a3a3a3"/></svg>
</div>
</main>
<div class="hbar d-flex align-items-center flex-shrink-0">
<svg width="21" height="10"><path d="M13 0 8 5 13 10Z" fill="#a3a3a3"/></svg>
<div class="hthumb align-self-end"></div>
<svg width="39" height="10"><path d="M26 0 31 5 26 10Z" fill="#505050"/></svg>
<div class="corner h-100 flex-fill"></div>
</div>

<footer class="taskbar d-flex align-items-center">
<div class="start d-flex justify-content-center"><svg width="20" height="20" viewBox="0 0 20 20"><path d="M0 2.800 8.300 1.600V9.500H0ZM9.300 1.500 20 0V9.500H9.300ZM0 10.500H8.300V18.400L0 17.200ZM9.300 10.500H20V20L9.300 18.500Z" fill="#fff"/></svg></div>
<div class="search d-flex align-items-center"><svg width="20" height="20"><circle cx="12.500" cy="7.500" r="6.500" fill="none" stroke="#222" stroke-width="1.500"/><path d="M8 12 .7 19.300" stroke="#222" stroke-width="1.500"/></svg><span>Type here to search</span></div>
<div class="tb t60 d-flex align-items-center justify-content-center"><svg width="20" height="20"><circle cx="10" cy="10" r="8.300" fill="none" stroke="#fff" stroke-width="2.600"/></svg></div>
<div class="tb t-view d-flex align-items-center justify-content-center"><svg width="21" height="20"><path d="M.7 5H13.300V15H.7ZM.7 0V2.500H13.300V0M.7 20V17.500H13.300V20M19 0V5M19 11V20" fill="none" stroke="#fff" stroke-width="1.300"/><path d="M17 6H21V9.500H17Z" fill="#fff"/></svg></div>
<div class="tb run t51 d-flex align-items-center justify-content-center"><svg width="28" height="24"><path d="M0 1H12L14 4H0Z" fill="#dd9a08"/><path d="M0 4H10L13 1.500H28V23H0Z" fill="#fcd05c"/><path d="M5 24V15Q5 13 7 13H21Q23 13 23 15V24H19V18H9V24Z" fill="#3b94dc"/></svg></div>
<div class="tb run t-active d-flex align-items-center justify-content-center"><svg width="28" height="28" viewBox="-14 -14 28 28"><circle r="14" fill="#fc4"/><path d="M0-7H12.100A14 14 0 0 0-12.100-7L-6 3.500Z" fill="#dd4b3e"/><path d="M-12.100-7A14 14 0 0 0 0 14L6 3.500-6 3.500Z" fill="#1a9c58"/><circle r="6.800" fill="#f3f3f3"/><circle r="5.300" fill="#4285f4"/></svg></div>
<div class="tb t60 d-flex align-items-center justify-content-center"><svg width="28" height="24"><path d="M.8.800H27.200V23.200H.8Z" fill="#050505" stroke="#a5acb0" stroke-width="1.500"/><path d="M1 3H27" stroke="#dde" stroke-width="2"/><path d="M1 4H27Q10 6 1 14Z" fill="#444"/><path d="M4 6V9M7 6.500V7M7 8.500V9M9 6 11 9M12 9H17" stroke="#fff"/></svg></div>
<div class="tb t64 d-flex align-items-center justify-content-center"><svg width="24" height="24" viewBox="-12 -12 24 24"><circle r="7" fill="none" stroke="#fff" stroke-width="3.200"/><path id="tooth" d="M-1.800-11.500H1.800L2.300-8H-2.300ZM-1.800 11.500H1.800L2.300 8H-2.300Z" fill="#fff"/><use href="#tooth" transform="rotate(45)"/><use href="#tooth" transform="rotate(90)"/><use href="#tooth" transform="rotate(135)"/></svg></div>
<div class="tb t62 d-flex align-items-center justify-content-center"><svg width="28" height="28"><defs><linearGradient id="pc" x1="0" y1="0" x2="1" y2="1"><stop offset="0" stop-color="#21d789"/><stop offset=".45" stop-color="#3ce27d"/><stop offset=".55" stop-color="#10b8e8"/><stop offset=".7" stop-color="#fcf84a"/><stop offset="1" stop-color="#fcf84a"/></linearGradient></defs><rect width="28" height="28" fill="url(#pc)"/><path d="M20 0H28V14L24 8Z" fill="#12b6ea"/><rect x="4" y="4" width="20" height="20" fill="#000"/><path d="M6 21H13" stroke="#fff" stroke-width="1.600"/><text x="5.500" y="15.500" font-family="Liberation Sans" font-weight="700" font-size="11.500" fill="#fff">PC</text></svg></div>
<div class="tb t62 d-flex align-items-center justify-content-center"><svg width="26" height="28"><circle cx="13" cy="13" r="12" fill="#3ddc84"/><path d="M13 4Q17.500 4 17 10 17 13 13 16 9 13 9 10 8.500 4 13 4Z" fill="#13404f"/><circle cx="13" cy="10" r="2" fill="#3ddc84"/><path d="M13 15 4.500 27M13 15 21.500 27M5 18Q13 25 21 18" fill="none" stroke="#d5e6f0" stroke-width="2.300"/></svg></div>
<div class="tb run t51 d-flex align-items-center justify-content-center ms-1"><svg width="30" height="30" viewBox="0 0 30 30"><path d="M22 0V9L4 22 0 19.500V18.500Z" fill="#0a72b8"/><path d="M22 30V21L4 8 0 10.500V11.500Z" fill="#1283cf"/><path d="M22 0 30 3.500V26.500L22 30Z" fill="#25a5f3"/></svg></div>
<div class="tb t62 d-flex justify-content-end"><div class="tb run t51 d-flex align-items-center justify-content-center"><svg width="28" height="26"><path d="M1 8 9 6V20H1Z" fill="#ccc"/><path d="M7 1 27 3 25 19 5 17Z" fill="#c9cccf"/><path d="M9 3 24.500 4.500 23 16.500 7.500 15Z" fill="#f6fafc"/><path d="M9 12 12 11 14 7 16 14 19 8 21 12H23" fill="none" stroke="#3b93c9" stroke-width="1.400"/><ellipse cx="16" cy="22" rx="7" ry="3.500" fill="#dcdcdc"/></svg></div></div>
<div class="d-flex align-items-center ms-auto">
<svg width="29" height="10"><path d="M1 9 9 1 17 9" fill="none" stroke="#fff" stroke-width="1.600"/></svg>
<svg width="29" height="12"><path d="M.7.700H17.300V11.300H.7Z" fill="none" stroke="#fff" stroke-width="1.300"/><path d="M2.500 2.500H15.500V9.500H2.500ZM18 4H19.500V8H18Z" fill="#fff"/></svg>
<svg width="33" height="18"><path d="M1 6H3.500L7 3V15L3.500 12H1Z" fill="none" stroke="#fff" stroke-width="1.300"/><path d="M10.500 7Q12 9 10.500 11" fill="none" stroke="#fff" stroke-width="1.300"/><path d="M13.500 4Q17.500 9 13.500 14M17 1Q22.500 9 17 17" fill="none" stroke="#777" stroke-width="1.300"/></svg>
<svg width="17" height="17"><path d="M1 16A15 15 0 0 1 16 1M5 16A11 11 0 0 1 16 5M9 16A7.500 7.500 0 0 1 16 9" fill="none" stroke="#ddd" stroke-width="1.300"/><circle cx="14" cy="14.500" r="2" fill="#fff"/></svg>
<div class="lang">ENG</div>
<div class="clock text-center">10:31<br>20-10-2020</div>
<svg class="note-ic" width="21" height="21"><path d="M.7 1H20.300V17H13L10.500 20 8 17H.7Z" fill="none" stroke="#fff" stroke-width="1.400"/></svg>
<div class="desk"></div>
</div>
</footer>
</body>
</html>
